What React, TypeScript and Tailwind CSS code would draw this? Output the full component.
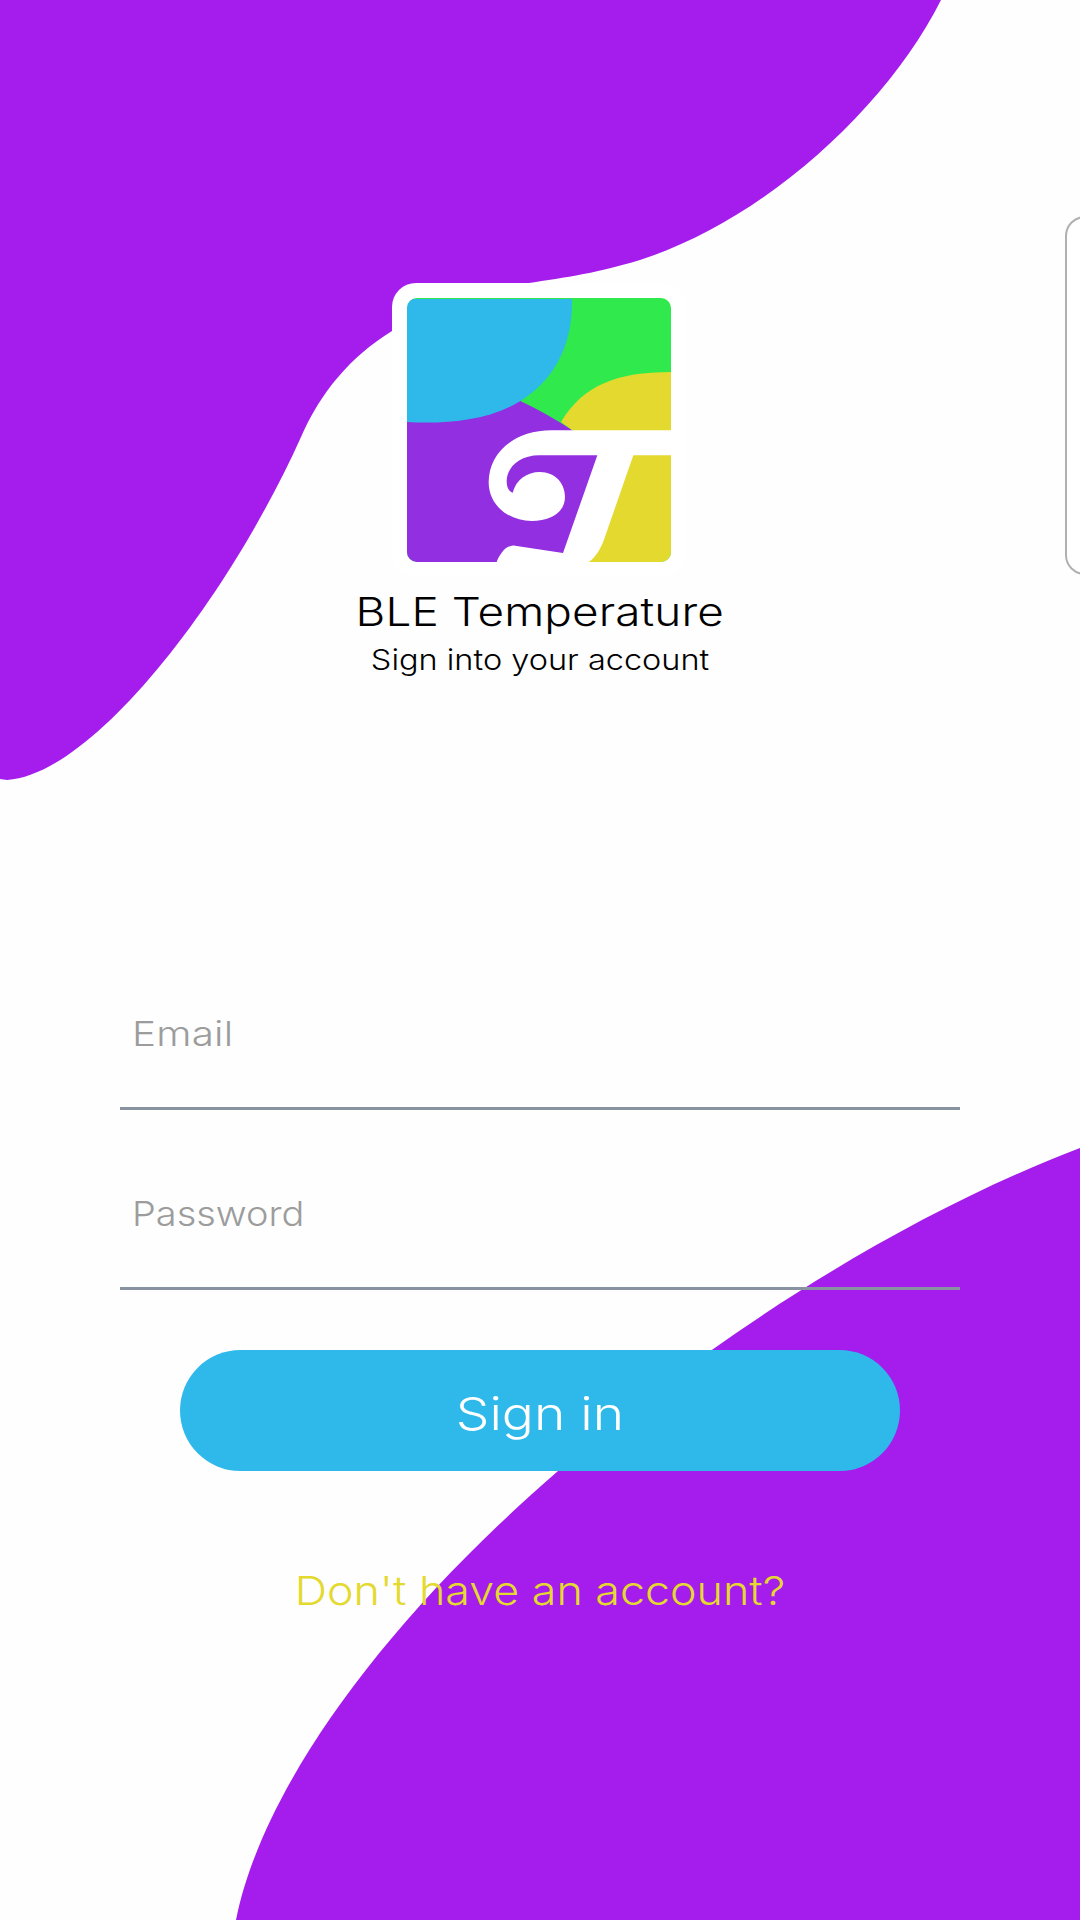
function Backdrop() {
  return (
    <svg className="absolute inset-0 h-[1920px] w-[1080px]" viewBox="0 0 1080 1920" fill="#a41dec" aria-hidden="true">
      <path d="M0 0H941C888 106 765 220 640 260C590 275 560 278 520 284.5C470 295 430 308 392 331C350 357 321 392 301 437C230 595 95 774 7 780L0 779Z" />
      <path d="M236 1920C262 1790 380 1625 558 1471C696 1350 887 1222 1080 1148V1920Z" />
    </svg>
  );
}

function Logo() {
  return (
    <div className="mr-[2px] h-[294px] w-[294px] rounded-3xl bg-white p-[15px]">
      <svg className="h-[264px] w-[264px] rounded-[10px]" viewBox="81 84 792 792" role="img" aria-label="BLE Temperature">
        <path fill="#2fe94d" d="M81 84H873V876H81Z" />
        <path fill="#922fe0" d="M81 440L421 393Q500 430 577 481L700 520L600 876H81Z" />
        <path fill="#e4d92f" d="M543 456C610 345 710 306 873 306V876H600L620 700L700 520L577 481Z" />
        <path fill="#2eb9ea" d="M81 87H576C578 230 520 330 421 393C330 450 200 463 81 456Z" />
        <path
          fill="#fff"
          d="M873 481H515C400 481 326 550 326 637C326 705 385 753 455 753C515 753 555 725 555 680C555 640 525 606 480 606C440 606 408 630 398 668C385 664 380 650 380 632C382 590 420 556 478 556H652L549 849L405 827C380 823 360 850 350 876H626C650 860 665 830 675 800L760 556H873Z"
        />
      </svg>
    </div>
  );
}

const field = "h-[120px] w-full border-b-[3px] border-[#8892a0] pl-3";
const input =
  "block h-[117px] w-[710px] origin-left bg-transparent pb-[30px] text-[34.5px] font-light text-black outline-none placeholder:text-[#9c9c9c] placeholder:opacity-100";

export default function App() {
  return (
    <main className="relative h-[1920px] w-[1080px] overflow-hidden bg-[#fefefe] font-['Inter',sans-serif]">
      <Backdrop />
      <div className="absolute top-[216px] left-[1065px] h-[359px] w-[300px] rounded-[20px] border-2 border-[#b0b0b0] bg-white" />
      <div className="relative flex flex-col items-center pt-[283px]">
        <Logo />
        <h1 className="mt-[11px] scale-x-116 text-[39.5px] leading-[48px] font-[350] tracking-[0.1px] whitespace-nowrap text-black">
          BLE Temperature
        </h1>
        <p className="mt-[6px] scale-x-112 text-[29px] leading-9 font-[350] whitespace-nowrap text-black">
          Sign into your account
        </p>
        <form className="mt-[312px] flex w-[840px] flex-col items-center">
          <div className={field}>
            <input className={`${input} scale-x-117 tracking-[0.2px]`} type="text" placeholder="Email" />
          </div>
          <div className={`mt-[60px] ${field}`}>
            <input className={`${input} scale-x-110`} type="password" placeholder="Password" />
          </div>
          <button type="button" className="mt-[60px] h-[121px] w-[720px] rounded-full bg-[#2eb9ea] pt-[6px] text-[45.5px] leading-[60px] font-light text-white">
            <span className="inline-block scale-x-117">Sign in</span>
          </button>
          <a className="mt-[90px] scale-x-112 text-[40px] leading-[60px] font-light whitespace-nowrap text-[#e4d92f]">
            Don't have an account?
          </a>
        </form>
      </div>
    </main>
  );
}
